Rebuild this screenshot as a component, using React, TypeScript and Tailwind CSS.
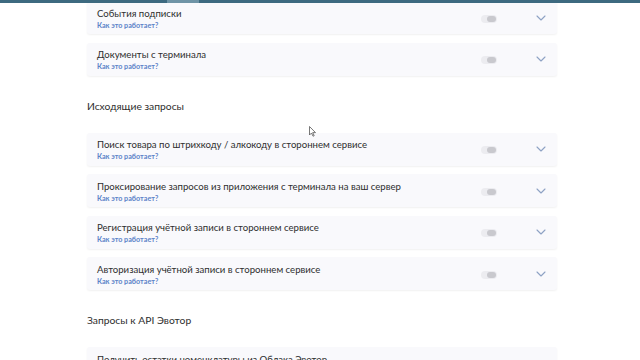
import React from "react";

const Chevron = () => (
  <svg width="10" height="6" viewBox="0 0 10 6" fill="none" className="shrink-0">
    <path d="M1 1l4 4 4-4" stroke="#8ea2c4" strokeWidth="1.1" strokeLinecap="round" strokeLinejoin="round" />
  </svg>
);

const Toggle = () => (
  <div className="relative w-[16px] h-[8px] rounded-full bg-[#ececf0] shrink-0">
    <div className="absolute right-[1px] top-[1px] w-[9px] h-[6px] rounded-[3px] bg-[#c9c9ce]" />
  </div>
);

const Card = ({ title }: { title: string }) => (
  <div className="h-[33px] shrink-0 rounded-[3px] bg-[#f9f9fc] shadow-[0_1px_2px_rgba(0,0,0,0.06)] flex items-center pl-[10px] pr-[11px]">
    <div className="flex-1 flex flex-col mt-[3px]">
      <div className="text-[9.6px] leading-[12px] text-[#2e2e2e]">{title}</div>
      <div className="text-[7.2px] leading-[10px] font-bold text-[#5b82c8] mt-[1px]">Как это работает?</div>
    </div>
    <div className="mt-[2px]"><Toggle /></div>
    <div className="ml-[39px]"><Chevron /></div>
  </div>
);

const Heading = ({ children }: { children: React.ReactNode }) => (
  <div className="mt-[22px] mb-[19px] h-[16px] text-[10.3px] leading-[16px] text-[#2e2e2e]">{children}</div>
);

export default function App() {
  return (
    <div className="relative w-[640px] h-[360px] overflow-hidden bg-white" style={{ fontFamily: 'Lato, "Noto Sans", sans-serif' }}>
      <div className="absolute top-0 left-0 right-0 h-[3px] bg-[#3d6a80] z-10" />
      <div className="absolute top-0 left-[167px] w-[32px] h-[3px] bg-[#6f94a6] z-10" />
      <div className="w-[470px] ml-[87px] pt-[1px] flex flex-col gap-[8.5px]">
        <Card title="События подписки" />
        <Card title="Документы с терминала" />
      </div>
      <div className="w-[470px] ml-[87px] flex flex-col">
        <Heading>Исходящие запросы</Heading>
        <div className="flex flex-col gap-[8.5px]">
          <Card title="Поиск товара по штрихкоду / алкокоду в стороннем сервисе" />
          <Card title="Проксирование запросов из приложения с терминала на ваш сервер" />
          <Card title="Регистрация учётной записи в стороннем сервисе" />
          <Card title="Авторизация учётной записи в стороннем сервисе" />
        </div>
        <Heading>Запросы к API Эвотор</Heading>
        <Card title="Получить остатки номенклатуры из Облака Эвотор" />
      </div>
      <svg className="absolute left-[309px] top-[126px]" width="8" height="11" viewBox="0 0 8 11">
        <path d="M0.5 0.5v8.5l2-2 1.5 3.2 1.2-.5-1.5-3.1h2.8z" fill="#fff" stroke="#555" strokeWidth="0.8" strokeLinejoin="round" />
      </svg>
    </div>
  );
}
